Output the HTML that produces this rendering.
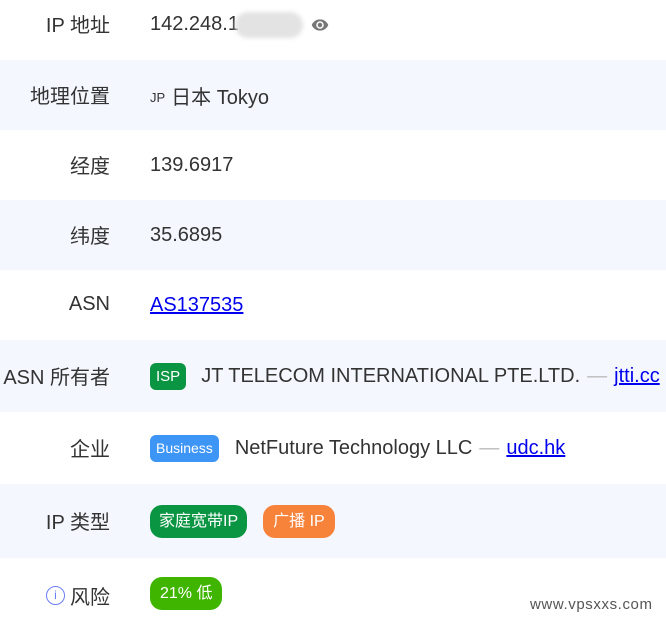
<!DOCTYPE html>
<html><head><meta charset="utf-8"><style>
body{margin:0;width:666px;height:624px;overflow:hidden;background:#fff;font-family:"Liberation Sans","Noto Sans CJK SC",sans-serif;color:#333;font-size:20px}
.r{position:absolute;left:0;width:666px;white-space:nowrap}
.bg{background:#f4f7fe}
.l{position:absolute;top:0;bottom:1px;right:556px;display:flex;align-items:center;justify-content:flex-end}
.v{position:absolute;top:1px;bottom:0;left:150px;display:flex;align-items:center}
.tag{color:#fff;border-radius:6px;font-size:15px;padding:0 6px;height:27px;line-height:27px;display:inline-block}
a{color:#00e;text-decoration:underline}
.dash{color:#bbb;margin:0 7px}
</style></head><body>
<div class="r" style="top:0;height:48px"><span class="l">IP 地址</span><span class="v">142.248.1<span style="display:inline-block;width:68px;height:26px;background:#e3e3e3;border-radius:13px;filter:blur(2px);margin-left:-4px"></span>
<svg width="22" height="18" viewBox="0 0 24 24" style="margin-left:6px"><path fill="#777" d="M12 4.5C7 4.5 2.7 7.6 1 12c1.7 4.4 6 7.5 11 7.5s9.3-3.1 11-7.5c-1.7-4.4-6-7.5-11-7.5zM12 17a5 5 0 1 1 0-10 5 5 0 0 1 0 10zm0-8a3 3 0 1 0 0 6 3 3 0 0 0 0-6z"/></svg></span></div>
<div class="r bg" style="top:60px;height:70px"><span class="l">地理位置</span><span class="v"><span style="font-size:13px;margin-right:6px;margin-top:3px">JP</span>日本 Tokyo</span></div>
<div class="r" style="top:130px;height:70px"><span class="l">经度</span><span class="v">139.6917</span></div>
<div class="r bg" style="top:200px;height:70px"><span class="l">纬度</span><span class="v">35.6895</span></div>
<div class="r" style="top:270px;height:70px"><span class="l">ASN</span><span class="v"><a>AS137535</a></span></div>
<div class="r bg" style="top:340px;height:72px"><span class="l">ASN 所有者</span><span class="v"><span class="tag" style="background:#0a9543;margin-right:15px">ISP</span><span>JT TELECOM INTERNATIONAL PTE.LTD.</span><span class="dash">—</span><a>jtti.cc</a></span></div>
<div class="r" style="top:412px;height:72px"><span class="l">企业</span><span class="v"><span class="tag" style="background:#3d95f5;margin-right:16px;font-size:14px">Business</span>NetFuture Technology LLC<span class="dash">—</span><a>udc.hk</a></span></div>
<div class="r bg" style="top:484px;height:74px"><span class="l">IP 类型</span><span class="v"><span class="tag" style="background:#0a9543;border-radius:12px;height:33px;line-height:33px;font-size:16px;padding:0 9px">家庭宽带IP</span><span class="tag" style="background:#f7823a;border-radius:12px;height:33px;line-height:33px;font-size:16px;padding:0 10px;margin-left:16px">广播 IP</span></span></div>
<div class="r" style="top:560px;height:72px"><span class="l" style="bottom:2px"><span style="display:inline-block;width:17px;height:17px;border:1px solid #6b7cf5;border-radius:50%;font-size:12px;line-height:17px;text-align:center;color:#6b7cf5;margin-right:5px">i</span>风险</span><span class="v" style="bottom:5px;top:0"><span class="tag" style="background:#3fb500;border-radius:12px;height:33px;line-height:33px;font-size:16px;padding:0 10px">21% 低</span></span></div>
<div style="position:absolute;left:530px;top:596px;font-size:15px;color:#555;letter-spacing:0.6px">www.vpsxxs.com</div>
</body></html>
